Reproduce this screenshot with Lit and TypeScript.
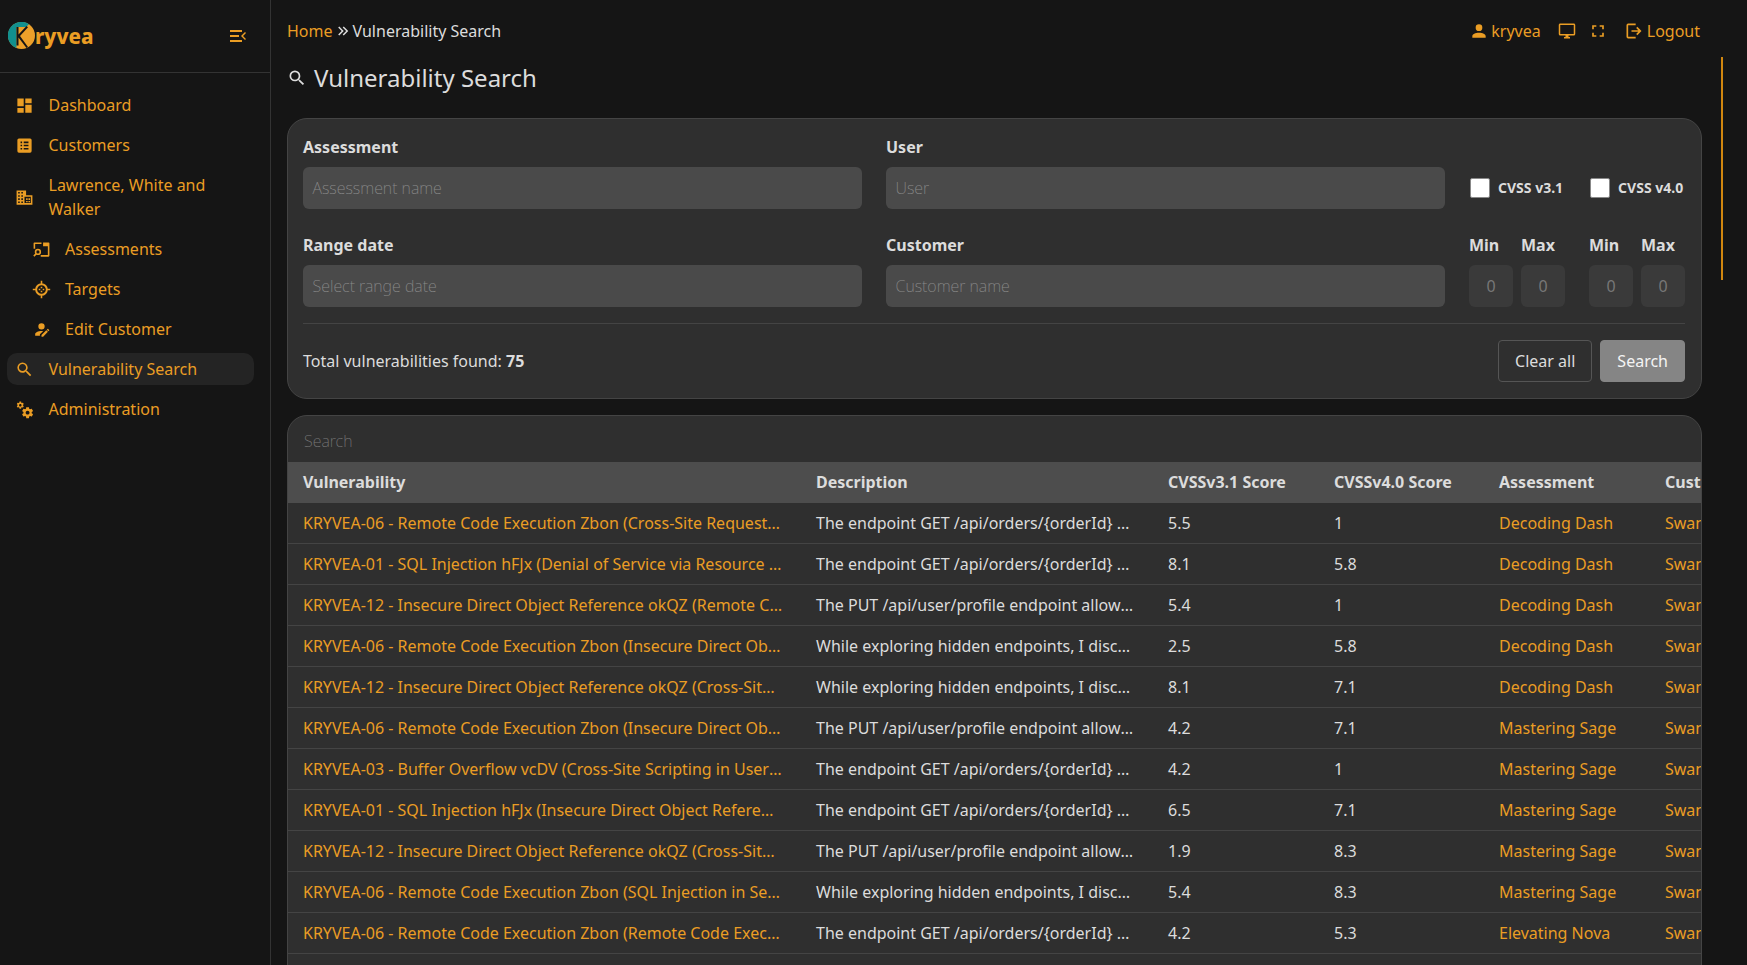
import { LitElement, html, css, svg } from 'lit';
import { customElement } from 'lit/decorators.js';

const icons = {
    dashboard: svg`<path d="M13,3V9H21V3M13,21H21V11H13M3,21H11V15H3M3,13H11V3H3V13Z" />`,
    customers: svg`<path fill-rule="evenodd" d="M5,3H19A2,2 0 0,1 21,5V19A2,2 0 0,1 19,21H5A2,2 0 0,1 3,19V5A2,2 0 0,1 5,3M7,7V9H9V7M11,7V9H17V7M7,11V13H9V11M11,11V13H17V11M7,15V17H9V15M11,15V17H17V15Z" />`,
    building: svg`<path fill-rule="evenodd" d="M2,3H14V9H22V21H2V3M4,5V7H6V5M8,5V7H10V5M4,9V11H6V9M8,9V11H10V9M4,13V15H6V13M8,13V15H10V13M4,17V19H6V17M8,17V19H10V17M12,11V19H20V11M14,13H16V15H14M14,16.5H16V18H14M17,13H19V15H17M17,16.5H19V18H17Z" />`,
    assessments: svg`<path d="M3,3H12V5H4V11H2V4A1,1 0 0,1 3,3M14,3H21A1,1 0 0,1 22,4V20A1,1 0 0,1 21,21H11V19H20V8H14V3M7.5,11A4,4 0 0,1 11.5,15A4,4 0 0,1 7.5,19C6.8,19 6.2,18.8 5.6,18.5L3,21L1.6,19.6L4.1,17.1C3.7,16.5 3.5,15.8 3.5,15A4,4 0 0,1 7.5,11M7.5,13A2,2 0 0,0 5.5,15A2,2 0 0,0 7.5,17A2,2 0 0,0 9.5,15A2,2 0 0,0 7.5,13Z" />`,
    target: svg`<path d="M12,4A8,8 0 0,1 20,12A8,8 0 0,1 12,20A8,8 0 0,1 4,12A8,8 0 0,1 12,4M12,6.5A5.5,5.5 0 0,0 6.5,12A5.5,5.5 0 0,0 12,17.5A5.5,5.5 0 0,0 17.5,12A5.5,5.5 0 0,0 12,6.5M11,1H13V5H11V1M11,19H13V23H11V19M1,11H5V13H1V11M19,11H23V13H19V11M11,8.5H13V10.5H11V8.5M11,13.5H13V15.5H11V13.5M8.5,11H10.5V13H8.5V11M13.5,11H15.5V13H13.5V11Z" />`,
    accountEdit: svg`<path d="M21.7,13.35L20.7,14.35L18.65,12.3L19.65,11.3C19.86,11.09 20.21,11.09 20.42,11.3L21.7,12.58C21.91,12.79 21.91,13.14 21.7,13.35M12,18.94L18.06,12.88L20.11,14.93L14.06,21H12V18.94M12,14C7.58,14 4,15.79 4,18V20H10V18.11L14,14.11C13.34,14.03 12.67,14 12,14M12,4A4,4 0 0,0 8,8A4,4 0 0,0 12,12A4,4 0 0,0 16,8A4,4 0 0,0 12,4Z" />`,
    magnify: svg`<path d="M9.5,3A6.5,6.5 0 0,1 16,9.5C16,11.11 15.41,12.59 14.44,13.73L14.71,14H15.5L20.5,19L19,20.5L14,15.5V14.71L13.73,14.44C12.59,15.41 11.11,16 9.5,16A6.5,6.5 0 0,1 3,9.5A6.5,6.5 0 0,1 9.5,3M9.5,5C7,5 5,7 5,9.5C5,12 7,14 9.5,14C12,14 14,12 14,9.5C14,7 12,5 9.5,5Z" />`,
    cogs: svg`<path d="M15.9,18.45C17.25,18.45 18.35,17.35 18.35,16C18.35,14.65 17.25,13.55 15.9,13.55C14.54,13.55 13.45,14.65 13.45,16C13.45,17.35 14.54,18.45 15.9,18.45M21.1,16.68L22.58,17.84C22.71,17.95 22.75,18.13 22.66,18.29L21.26,20.71C21.17,20.86 21,20.92 20.83,20.86L19.09,20.16C18.73,20.44 18.34,20.67 17.91,20.85L17.64,22.7C17.61,22.87 17.47,23 17.3,23H14.5C14.32,23 14.18,22.87 14.15,22.7L13.89,20.85C13.45,20.67 13.07,20.44 12.71,20.16L10.96,20.86C10.81,20.92 10.62,20.86 10.54,20.71L9.14,18.29C9.05,18.13 9.09,17.95 9.22,17.84L10.7,16.68L10.65,16L10.7,15.31L9.22,14.16C9.09,14.05 9.05,13.86 9.14,13.71L10.54,11.29C10.62,11.13 10.81,11.07 10.96,11.13L12.71,11.84C13.07,11.56 13.45,11.32 13.89,11.15L14.15,9.29C14.18,9.13 14.32,9 14.5,9H17.3C17.47,9 17.61,9.13 17.64,9.29L17.91,11.15C18.34,11.32 18.73,11.56 19.09,11.84L20.83,11.13C21,11.07 21.17,11.13 21.26,11.29L22.66,13.71C22.75,13.86 22.71,14.05 22.58,14.16L21.1,15.31L21.15,16L21.1,16.68M6.69,8.07C7.56,8.07 8.26,7.37 8.26,6.5C8.26,5.63 7.56,4.92 6.69,4.92A1.58,1.58 0 0,0 5.11,6.5C5.11,7.37 5.82,8.07 6.69,8.07M10.03,6.94L11,7.68C11.07,7.75 11.09,7.87 11.03,7.97L10.13,9.53C10.08,9.63 9.96,9.67 9.86,9.63L8.74,9.18L8,9.62L7.81,10.81C7.79,10.92 7.7,11 7.59,11H5.79C5.67,11 5.58,10.92 5.56,10.81L5.4,9.62L4.64,9.18L3.5,9.63C3.41,9.67 3.3,9.63 3.24,9.53L2.34,7.97C2.28,7.87 2.31,7.75 2.39,7.68L3.34,6.94L3.31,6.5L3.34,6.06L2.39,5.32C2.31,5.25 2.28,5.13 2.34,5.03L3.24,3.47C3.3,3.37 3.41,3.33 3.5,3.37L4.63,3.82L5.4,3.38L5.56,2.19C5.58,2.08 5.67,2 5.79,2H7.59C7.7,2 7.79,2.08 7.81,2.19L8,3.38L8.74,3.82L9.86,3.37C9.96,3.33 10.08,3.37 10.13,3.47L11.03,5.03C11.09,5.13 11.07,5.25 11,5.32L10.03,6.06L10.05,6.5L10.03,6.94Z" />`,
    account: svg`<path d="M12,4A4,4 0 0,1 16,8A4,4 0 0,1 12,12A4,4 0 0,1 8,8A4,4 0 0,1 12,4M12,14C16.42,14 20,15.79 20,18V20H4V18C4,15.79 7.58,14 12,14Z" />`,
    monitor: svg`<path d="M21,16H3V4H21M21,2H3C1.89,2 1,2.89 1,4V16A2,2 0 0,0 3,18H10V20H8V22H16V20H14V18H21A2,2 0 0,0 23,16V4C23,2.89 22.1,2 21,2Z" />`,
    fullscreen: svg`<path d="M5,5H10V7H7V10H5V5M14,5H19V10H17V7H14V5M17,14H19V19H14V17H17V14M10,17V19H5V14H7V17H10Z" />`,
    logout: svg`<path d="M5,3H14V5H5V19H14V21H5A2,2 0 0,1 3,19V5A2,2 0 0,1 5,3M16,7L21,12L16,17L14.6,15.6L17.2,13H9V11H17.2L14.6,8.4L16,7Z" />`,
    chevrons: svg`<path d="M5.59,7.41L7,6L13,12L7,18L5.59,16.59L10.17,12L5.59,7.41M11.59,7.41L13,6L19,12L13,18L11.59,16.59L16.17,12L11.59,7.41Z" />`,
};

type IconName = keyof typeof icons;

const icon = (name: IconName, cls = 'icon') =>
    html`<svg class=${cls} viewBox="0 0 24 24" fill="currentColor">${icons[name]}</svg>`;

const GET_ORDERS = 'The endpoint GET /api/orders/{orderId} was found to be vulnerable';
const PUT_PROFILE = 'The PUT /api/user/profile endpoint allows changes';
const HIDDEN = 'While exploring hidden endpoints, I discovered a route';

const rows = [
    ['KRYVEA-06 - Remote Code Execution Zbon (Cross-Site Request Forgery in Settings)', GET_ORDERS, '5.5', '1', 'Decoding Dash'],
    ['KRYVEA-01 - SQL Injection hFJx (Denial of Service via Resource Exhaustion)', GET_ORDERS, '8.1', '5.8', 'Decoding Dash'],
    ['KRYVEA-12 - Insecure Direct Object Reference okQZ (Remote Code Execution)', PUT_PROFILE, '5.4', '1', 'Decoding Dash'],
    ['KRYVEA-06 - Remote Code Execution Zbon (Insecure Direct Object Reference)', HIDDEN, '2.5', '5.8', 'Decoding Dash'],
    ['KRYVEA-12 - Insecure Direct Object Reference okQZ (Cross-Site Scripting)', HIDDEN, '8.1', '7.1', 'Decoding Dash'],
    ['KRYVEA-06 - Remote Code Execution Zbon (Insecure Direct Object Reference)', PUT_PROFILE, '4.2', '7.1', 'Mastering Sage'],
    ['KRYVEA-03 - Buffer Overflow vcDV (Cross-Site Scripting in User Profile)', GET_ORDERS, '4.2', '1', 'Mastering Sage'],
    ['KRYVEA-01 - SQL Injection hFJx (Insecure Direct Object Reference)', GET_ORDERS, '6.5', '7.1', 'Mastering Sage'],
    ['KRYVEA-12 - Insecure Direct Object Reference okQZ (Cross-Site Scripting)', PUT_PROFILE, '1.9', '8.3', 'Mastering Sage'],
    ['KRYVEA-06 - Remote Code Execution Zbon (SQL Injection in Search Form)', HIDDEN, '5.4', '8.3', 'Mastering Sage'],
    ['KRYVEA-06 - Remote Code Execution Zbon (Remote Code Execution via Upload)', GET_ORDERS, '4.2', '5.3', 'Elevating Nova'],
    ['KRYVEA-01 - SQL Injection hFJx (Remote Code Execution via Upload)', GET_ORDERS, '4.2', '5.3', 'Elevating Nova'],
];

const nav: { label: string; icon: IconName; sub?: boolean; active?: boolean }[] = [
    { label: 'Dashboard', icon: 'dashboard' },
    { label: 'Customers', icon: 'customers' },
    { label: 'Lawrence, White and Walker', icon: 'building' },
    { label: 'Assessments', icon: 'assessments', sub: true },
    { label: 'Targets', icon: 'target', sub: true },
    { label: 'Edit Customer', icon: 'accountEdit', sub: true },
    { label: 'Vulnerability Search', icon: 'magnify', active: true },
    { label: 'Administration', icon: 'cogs' },
];

@customElement('app-root')
export class AppRoot extends LitElement {
    static override styles = css`
        :host {
            display: flex;
            height: 965px;
            overflow: hidden;
            position: relative;
            background: #151515;
            color: #dcdcdc;
            font-family: "Noto Sans", sans-serif;
            font-size: 16px;
            line-height: 24px;
            --orange: #ea9d24;
        }

        .sidebar {
            width: 270px;
            flex: none;
            border-right: 1px solid #333;
            color: var(--orange);
        }

        .brand {
            height: 73px;
            box-sizing: border-box;
            border-bottom: 1px solid #333;
            display: flex;
            align-items: center;
            justify-content: space-between;
            padding: 0 24px 1px 8px;
        }

        .logo {
            display: flex;
            align-items: center;
        }

        .logo svg {
            width: 27px;
            height: 27px;
            flex: none;
        }

        .logo span {
            font-weight: 800;
            font-size: 20.5px;
        }

        .collapse {
            width: 16px;
            height: 12px;
        }

        .menu {
            display: flex;
            flex-direction: column;
            gap: 8px;
            padding: 16px 16px 0 7px;
        }

        .item {
            display: flex;
            align-items: center;
            gap: 14.5px;
            padding: 4px 0 4px 8px;
            border-radius: 10px;
        }

        .item.sub {
            padding-left: 24.5px;
        }

        .item.active {
            background: #242424;
        }

        .icon {
            width: 19px;
            height: 19px;
            flex: none;
        }

        .main {
            flex: 1;
            min-width: 0;
            padding: 0 45px 0 16px;
            box-sizing: border-box;
        }

        .top {
            height: 62px;
            display: flex;
            align-items: center;
            justify-content: space-between;
            padding-right: 2px;
        }

        .crumbs {
            display: flex;
            align-items: center;
        }

        .crumbs a {
            color: var(--orange);
        }

        .sep {
            width: 18px;
            height: 18px;
            margin: 0 1px;
        }

        .actions {
            display: flex;
            align-items: center;
            color: var(--orange);
        }

        .action {
            display: flex;
            align-items: center;
            gap: 2px;
        }

        .action .icon {
            width: 20px;
            height: 20px;
        }

        .action.screen {
            margin-left: 17px;
        }

        .action.screen .icon {
            width: 18px;
            height: 18px;
        }

        .action.full {
            margin-left: 12px;
        }

        .action.exit {
            margin-left: 16px;
            gap: 3px;
        }

        h1 {
            margin: 0 0 24px;
            height: 32px;
            display: flex;
            align-items: center;
            gap: 7px;
            font-size: 24px;
            font-weight: 400;
            line-height: 32px;
        }

        h1 .icon {
            width: 20px;
            height: 20px;
        }

        .card {
            background: #2f2f2f;
            border: 1px solid #444;
            border-radius: 20px;
        }

        .filters {
            padding: 16px 16px 16px 15px;
            margin-bottom: 16px;
        }

        .grid {
            display: grid;
            grid-template-columns: 1fr 1fr 216px;
            gap: 24px;
        }

        label {
            display: block;
            font-weight: 700;
            margin-bottom: 8px;
        }

        .field {
            height: 42px;
            box-sizing: border-box;
            background: #4a4a4a;
            border-radius: 6px;
            padding: 0 9.5px;
            display: flex;
            align-items: center;
            color: #8a8a8a;
            font-weight: 200;
        }

        .ranges {
            display: flex;
            gap: 24px;
        }

        .range {
            display: grid;
            grid-template-columns: 44px 44px;
            column-gap: 8px;
        }

        .range .field {
            background: #3a3a3a;
            justify-content: center;
            color: #777;
            font-weight: 400;
            padding: 0;
        }

        .checks {
            display: flex;
            align-items: center;
            gap: 27px;
            height: 42px;
            margin-top: 32px;
        }

        .check {
            display: flex;
            align-items: center;
            gap: 8px;
            font-size: 14px;
            font-weight: 700;
            margin-left: 1px;
        }

        .check + .check {
            margin-left: 0;
        }

        .box {
            width: 20px;
            height: 20px;
            box-sizing: border-box;
            background: #fff;
            border: 1px solid #888;
            border-radius: 2px;
        }

        hr {
            border: 0;
            border-top: 1px solid #444;
            margin: 16px 0;
        }

        .foot {
            display: flex;
            align-items: center;
            justify-content: space-between;
        }

        .buttons {
            display: flex;
            gap: 8px;
        }

        button {
            height: 42px;
            box-sizing: border-box;
            font: inherit;
            border-radius: 4px;
            padding: 0 16px;
            color: #dcdcdc;
            background: transparent;
            border: 1px solid #555;
        }

        button.primary {
            background: #858585;
            border-color: #858585;
            color: #f4f4f4;
        }

        .results {
            overflow: hidden;
        }

        .filter-box {
            height: 46px;
            box-sizing: border-box;
            display: flex;
            align-items: center;
            padding: 4px 16px 0;
            color: #787878;
            font-weight: 200;
        }

        table {
            table-layout: fixed;
            border-collapse: separate;
            border-spacing: 0;
            width: 1561px;
        }

        .c-vuln { width: 512px; }
        .c-desc { width: 352px; }
        .c-v3 { width: 166px; }
        .c-v4 { width: 165px; }
        .c-ass { width: 166px; }
        .c-cust { width: 200px; }

        th, td {
            height: 41px;
            padding: 0 16px;
            text-align: left;
            white-space: nowrap;
            overflow: hidden;
            text-overflow: ellipsis;
            box-sizing: border-box;
        }

        th:first-child, td:first-child {
            padding-left: 15px;
            padding-right: 17px;
        }

        th {
            background: #4d4d4d;
            font-weight: 700;
            padding-bottom: 2px;
        }

        td {
            border-bottom: 1px solid #444;
        }

        td.link {
            color: var(--orange);
        }

        .thumb {
            position: absolute;
            left: 1721px;
            top: 57px;
            width: 2px;
            height: 223px;
            background: #d1870f;
        }
    `;

    override render() {
        return html`
            <aside class="sidebar">
                <div class="brand">
                    <div class="logo">
                        <svg viewBox="0 0 27 27">
                            <circle cx="13.5" cy="13.5" r="13.5" fill="#eca02a" />
                            <path fill="#12908e" d="M21,2.3A13.5,13.5 0 1,0 8.5,26L8.5,5L18,5Z" />
                            <path fill="#151515" d="M8.5,5H10.5V12.5L18.5,4L20,5.2L12,14L20,25L18.5,26L10.5,15.5V23.5H8.5Z" />
                        </svg>
                        <span>ryvea</span>
                    </div>
                    <svg class="collapse" viewBox="0 0 16 12" fill="currentColor">
                        <path d="M0,0H12V2H0V0M0,5H9V7H0V5M0,10H12V12H0V10M15,2L11,6L15,10L16,9L13,6L16,3Z" />
                    </svg>
                </div>
                <nav class="menu">
                    ${nav.map(n => html`
                        <div class="item ${n.sub ? 'sub' : ''} ${n.active ? 'active' : ''}">
                            ${icon(n.icon)}
                            <span>${n.label}</span>
                        </div>
                    `)}
                </nav>
            </aside>
            <main class="main">
                <div class="top">
                    <div class="crumbs"><a>Home</a>${icon('chevrons', 'sep')}Vulnerability Search</div>
                    <div class="actions">
                        <span class="action">${icon('account')}kryvea</span>
                        <span class="action screen">${icon('monitor')}</span>
                        <span class="action full">${icon('fullscreen')}</span>
                        <span class="action exit">${icon('logout')}Logout</span>
                    </div>
                </div>
                <h1>${icon('magnify')}Vulnerability Search</h1>
                <section class="card filters">
                    <div class="grid">
                        <div>
                            <label>Assessment</label>
                            <div class="field">Assessment name</div>
                        </div>
                        <div>
                            <label>User</label>
                            <div class="field">User</div>
                        </div>
                        <div class="checks">
                            <div class="check"><div class="box"></div>CVSS v3.1</div>
                            <div class="check"><div class="box"></div>CVSS v4.0</div>
                        </div>
                        <div>
                            <label>Range date</label>
                            <div class="field">Select range date</div>
                        </div>
                        <div>
                            <label>Customer</label>
                            <div class="field">Customer name</div>
                        </div>
                        <div class="ranges">
                            <div class="range">
                                <label>Min</label><label>Max</label>
                                <div class="field">0</div><div class="field">0</div>
                            </div>
                            <div class="range">
                                <label>Min</label><label>Max</label>
                                <div class="field">0</div><div class="field">0</div>
                            </div>
                        </div>
                    </div>
                    <hr />
                    <div class="foot">
                        <div>Total vulnerabilities found: <b>75</b></div>
                        <div class="buttons">
                            <button>Clear all</button>
                            <button class="primary">Search</button>
                        </div>
                    </div>
                </section>
                <section class="card results">
                    <div class="filter-box">Search</div>
                    <table>
                        <colgroup>
                            <col class="c-vuln" /><col class="c-desc" /><col class="c-v3" />
                            <col class="c-v4" /><col class="c-ass" /><col class="c-cust" />
                        </colgroup>
                        <thead>
                            <tr>
                                <th>Vulnerability</th><th>Description</th><th>CVSSv3.1 Score</th>
                                <th>CVSSv4.0 Score</th><th>Assessment</th><th>Customer</th>
                            </tr>
                        </thead>
                        <tbody>
                            ${rows.map(r => html`
                                <tr>
                                    <td class="link">${r[0]}</td>
                                    <td>${r[1]}</td>
                                    <td>${r[2]}</td>
                                    <td>${r[3]}</td>
                                    <td class="link">${r[4]}</td>
                                    <td class="link">Swanson Group</td>
                                </tr>
                            `)}
                        </tbody>
                    </table>
                </section>
            </main>
            <div class="thumb"></div>
        `;
    }
}
